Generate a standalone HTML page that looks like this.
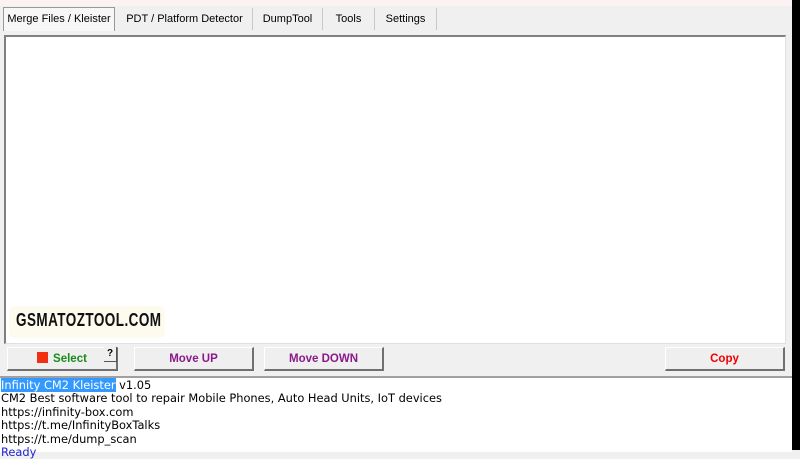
<!DOCTYPE html>
<html><head><style>
body{margin:0;width:800px;height:450px;overflow:hidden;background:#f0f0f0;font-family:"Liberation Sans",sans-serif;position:relative}
.a{position:absolute}
.tab{position:absolute;top:8px;height:22px;font-size:11px;line-height:22px;color:#000;text-align:center;border-right:1px solid #c8c8c8;white-space:nowrap}
.btn{position:absolute;top:347px;height:21px;background:#efefef;border:1px solid #fff;border-right:2px solid #707070;border-bottom:2px solid #707070;font-weight:bold;font-size:11.5px;text-align:center;line-height:23px}
.log{font-family:"DejaVu Sans",sans-serif;font-size:11.4px;line-height:13.3px;white-space:pre}
</style></head><body>
<div class="a" style="left:0;top:0;width:800px;height:6px;background:#fbf2f2"></div>
<div class="tab" style="left:3px;width:110px;top:7px;height:23px;background:#f7f7f7;border:1px solid #999;border-bottom:none">Merge Files / Kleister</div>
<div class="tab" style="left:117px;width:135px">PDT / Platform Detector</div>
<div class="tab" style="left:253px;width:69px">DumpTool</div>
<div class="tab" style="left:323px;width:51px">Tools</div>
<div class="tab" style="left:375px;width:61px">Settings</div>
<div class="a" style="left:4px;top:35px;width:779px;height:306px;background:#fff;border-top:2px solid #808080;border-left:2px solid #808080;border-right:1px solid #e0e0e0;border-bottom:1px solid #e0e0e0"></div>
<div class="a" style="left:9px;top:306px;width:156px;height:32px;background:#fdfbee;border-radius:6px"></div>
<div class="a" style="left:16px;top:308px;font-family:'Liberation Sans',sans-serif;font-weight:bold;font-size:18px;line-height:24px;letter-spacing:0.6px;color:#111;transform:scaleX(0.75);transform-origin:left">GSMATOZTOOL.COM</div>
<div class="btn" style="left:7px;width:108px;color:#1a8a1a"><span style="display:inline-block;width:11px;height:11px;background:#f03010;vertical-align:-1px;margin-right:5px"></span>Select</div>
<div class="a" style="left:104px;top:347px;width:12px;height:14px;background:#efefef;border-right:1px solid #555;border-bottom:1px solid #555;font-size:10px;font-weight:bold;text-align:center;line-height:13px">?</div>
<div class="btn" style="left:134px;width:117px;color:#8a1a8a">Move UP</div>
<div class="btn" style="left:264px;width:117px;color:#8a1a8a">Move DOWN</div>
<div class="btn" style="left:665px;width:117px;color:#f00000">Copy</div>
<div class="a" style="left:0;top:376px;width:792px;height:74px;background:#fff;border-top:2px solid #a0a0a0"></div>
<div class="a log" style="left:1px;top:379px;line-height:13.4px"><span style="background:#3399ff;color:#fff">Infinity CM2 Kleister</span> v1.05
CM2 Best software tool to repair Mobile Phones, Auto Head Units, IoT devices
https://infinity-box.com
https://t.me/InfinityBoxTalks
https://t.me/dump_scan
<span style="color:#2020d0">Ready</span></div>
<div class="a" style="left:792px;top:0;width:8px;height:450px;background:#000"></div>
</body></html>
